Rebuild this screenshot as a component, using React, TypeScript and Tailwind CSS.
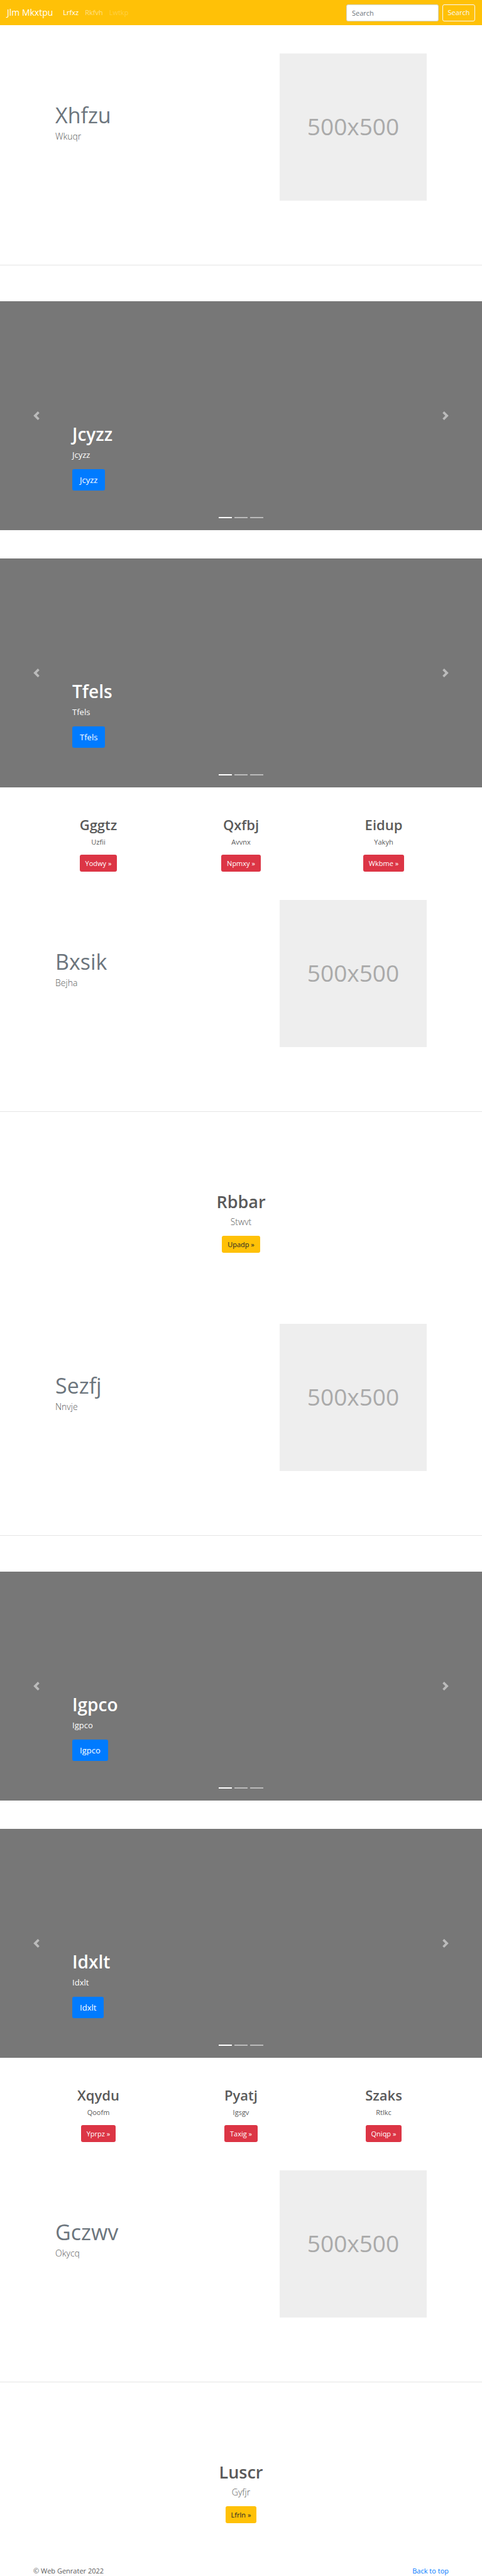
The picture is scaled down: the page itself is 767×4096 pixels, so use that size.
import React from "react";

type Column = { title: string; text: string; action: string };

function Navbar() {
  return (
    <header className="flex h-10 items-center bg-[#ffc107] px-[11px]">
      <a href="#" className="mr-4 text-[14px] leading-5 text-white">
        Jlm Mkxtpu
      </a>
      <nav className="flex grow gap-[10px] text-[11px] leading-5">
        <a href="#" className="text-white">Lrfxz</a>
        <a href="#" className="text-white/50">Rkfvh</a>
        <a href="#" className="text-white/25">Lwtkp</a>
      </nav>
      <form className="flex gap-[6px] text-[11px]" onSubmit={(e) => e.preventDefault()}>
        <input
          type="search"
          aria-label="Search"
          placeholder="Search"
          className="h-[27px] w-[147px] rounded-[3px] border border-[#ced4da] bg-white px-2 text-[#495057] placeholder:text-[#6c757d]"
        />
        <button type="submit" className="h-[27px] w-[52px] rounded-[3px] border border-[#f8f9fa] text-[#f8f9fa]">
          Search
        </button>
      </form>
    </header>
  );
}

function Feature({ title, text }: { title: string; text: string }) {
  return (
    <section className="flex justify-between border-b border-black/10 px-[88px] pb-[102px]">
      <div className="pt-[75px]">
        <h2 className="text-[34px] leading-[46px] text-[#6c757d]">{title}</h2>
        <p className="text-[14px] font-light leading-[22px] text-[#5a5a5a]">{text}</p>
      </div>
      <div
        role="img"
        aria-label="500x500"
        className="flex size-[234px] items-center justify-center bg-[#eeeeee] pb-1 text-[37px] leading-none text-[#aaaaaa]"
      >
        500x500
      </div>
    </section>
  );
}

function Carousel({ title }: { title: string }) {
  return (
    <section className="relative flex h-[364px] flex-col items-start justify-end bg-[#777777] px-[15%] pb-[63px] text-white">
      <h2 className="text-[28px] font-semibold leading-9">{title}</h2>
      <p className="mt-[5px] text-[13px] leading-5">{title}</p>
      <a href="#" className="mt-[13px] flex h-[34px] items-center rounded-[3px] bg-[#007bff] px-3 text-[13px] leading-5">
        {title}
      </a>
      <button
        type="button"
        aria-label="Previous"
        className="absolute inset-y-0 left-0 flex w-[15%] items-center justify-center opacity-50"
      >
        <svg viewBox="0 0 8 8" className="size-[14px]" fill="#fff">
          <path d="M5.25 0l-4 4 4 4 1.5-1.5L4.25 4l2.5-2.5L5.25 0z" />
        </svg>
      </button>
      <button
        type="button"
        aria-label="Next"
        className="absolute inset-y-0 right-0 flex w-[15%] items-center justify-center opacity-50"
      >
        <svg viewBox="0 0 8 8" className="size-[14px]" fill="#fff">
          <path d="M2.75 0l-1.5 1.5L3.75 4l-2.5 2.5L2.75 8l4-4-4-4z" />
        </svg>
      </button>
      <div className="absolute inset-x-0 bottom-[19px] flex justify-center gap-1">
        <button type="button" aria-label="Slide 1" className="h-[2px] w-[21px] bg-white" />
        <button type="button" aria-label="Slide 2" className="h-[2px] w-[21px] bg-white/50" />
        <button type="button" aria-label="Slide 3" className="h-[2px] w-[21px] bg-white/50" />
      </div>
    </section>
  );
}

function Columns({ items }: { items: Column[] }) {
  return (
    <section className="grid grid-cols-3 px-[43px] py-[45px] text-center text-[#5a5a5a]">
      {items.map((item) => (
        <div key={item.title} className="flex flex-col items-center">
          <h2 className="text-[22px] font-semibold leading-7">{item.title}</h2>
          <p className="mt-[5px] text-[11px] leading-[17px]">{item.text}</p>
          <a
            href="#"
            className="mt-3 flex h-[27px] items-center rounded-[3px] bg-[#dc3545] px-[9px] text-[11px] leading-4 text-white"
          >
            {item.action} »
          </a>
        </div>
      ))}
    </section>
  );
}

function Callout({ title, text, action }: Column) {
  return (
    <section className="flex flex-col items-center pt-[125px] text-[#5a5a5a]">
      <h2 className="text-[27px] font-semibold leading-9">{title}</h2>
      <p className="mt-[3px] text-[14px] font-light leading-[22px]">{text}</p>
      <a
        href="#"
        className="mt-[11px] flex h-[27px] items-center rounded-[3px] bg-[#ffc107] px-[9px] text-[11px] leading-4 text-[#212529]"
      >
        {action} »
      </a>
    </section>
  );
}

export default function App() {
  return (
    <div className="bg-white font-['Open_Sans','Noto_Sans',sans-serif] text-[#5a5a5a]">
      <Navbar />
      <main>
        <div className="pt-[45px]">
          <Feature title="Xhfzu" text="Wkuqr" />
        </div>
        <div className="flex flex-col gap-[45px] pt-[57px]">
          <Carousel title="Jcyzz" />
          <Carousel title="Tfels" />
        </div>
        <Columns
          items={[
            { title: "Gggtz", text: "Uzfii", action: "Yodwy" },
            { title: "Qxfbj", text: "Avvnx", action: "Npmxy" },
            { title: "Eidup", text: "Yakyh", action: "Wkbme" },
          ]}
        />
        <Feature title="Bxsik" text="Bejha" />
        <div className="pb-[113px]">
          <Callout title="Rbbar" text="Stwvt" action="Upadp" />
        </div>
        <Feature title="Sezfj" text="Nnvje" />
        <div className="flex flex-col gap-[45px] pt-[57px]">
          <Carousel title="Igpco" />
          <Carousel title="Idxlt" />
        </div>
        <Columns
          items={[
            { title: "Xqydu", text: "Qoofm", action: "Yprpz" },
            { title: "Pyatj", text: "Igsgv", action: "Taxig" },
            { title: "Szaks", text: "Rtlkc", action: "Qniqp" },
          ]}
        />
        <Feature title="Gczwv" text="Okycq" />
        <Callout title="Luscr" text="Gyfjr" action="Lfrln" />
      </main>
      <footer className="flex justify-between px-[53px] pt-[68px] text-[11px] leading-4">
        <p>© Web Genrater 2022</p>
        <a href="#" className="text-[#007bff]">Back to top</a>
      </footer>
    </div>
  );
}
